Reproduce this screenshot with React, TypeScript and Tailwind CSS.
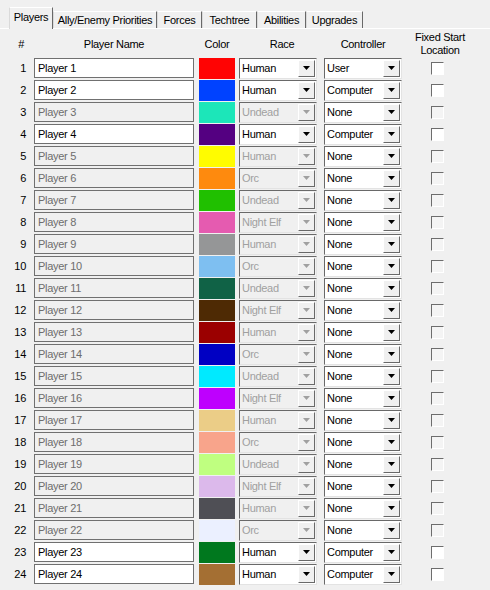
import React from "react";
import clsx from "clsx";

type Slot = {
  name: string;
  color: string;
  race: string;
  ctrl: string;
  on: boolean;
};

const COLORS = [
  "#ff0303",
  "#0042ff",
  "#1ce6b9",
  "#540081",
  "#fffc00",
  "#fe8a0e",
  "#20c000",
  "#e55bb0",
  "#959697",
  "#7ebff1",
  "#106246",
  "#4e2a04",
  "#9b0000",
  "#0000c3",
  "#00eaff",
  "#be00fe",
  "#ebcd87",
  "#f8a48b",
  "#bfff80",
  "#dcb9eb",
  "#4f4f55",
  "#ebf0ff",
  "#00781e",
  "#a46f33",
];

const RACES = ["Human", "Orc", "Undead", "Night Elf"];
const ACTIVE: Record<number, string> = { 1: "User", 2: "Computer", 4: "Computer", 23: "Computer", 24: "Computer" };

const SLOTS: Slot[] = COLORS.map((color, i) => {
  const n = i + 1;
  const on = n in ACTIVE;
  return {
    name: `Player ${n}`,
    color,
    race: on ? "Human" : RACES[i % 4],
    ctrl: ACTIVE[n] ?? "None",
    on,
  };
});

const TABS = [
  { label: "Players", w: "w-[44px]" },
  { label: "Ally/Enemy Priorities", w: "w-[104px]" },
  { label: "Forces", w: "w-[45px]" },
  { label: "Techtree", w: "w-[55px]" },
  { label: "Abilities", w: "w-[49px]" },
  { label: "Upgrades", w: "w-[57px]" },
];

const Arrow = ({ disabled }: { disabled?: boolean }) => (
  <svg width="7" height="4" viewBox="0 0 7 4">
    <path d="M0 0h7L3.5 4z" fill={disabled ? "#a0a0a0" : "#000"} />
  </svg>
);

const Combo = ({ value, disabled }: { value: string; disabled?: boolean }) => (
  <div
    className={clsx(
      "flex h-[21px] w-[78px] items-center border border-t-[#696969] border-l-[#696969] border-r-[#e3e3e3] border-b-[#e3e3e3]",
      disabled ? "bg-[#f0f0f0] text-[#a0a0a0]" : "bg-white text-black"
    )}
  >
    <span className="flex-1 truncate pl-[2px]">{value}</span>
    <div className="mr-[1px] flex h-[17px] w-[17px] items-center justify-center border border-t-white border-l-white border-r-[#696969] border-b-[#696969] bg-[#f0f0f0]">
      <Arrow disabled={disabled} />
    </div>
  </div>
);

const PlayerRow = ({ slot, n }: { slot: Slot; n: number }) => (
  <div className="flex h-[22px] items-center">
    <div className="w-[28px] pr-[2px] text-right text-black">{n}</div>
    {/* name edit box */}
    <div
      className={clsx(
        "ml-[6px] flex h-[20px] w-[160px] items-center border border-[#707070] pl-[3px]",
        slot.on ? "bg-white text-black" : "bg-[#f0f0f0] text-[#6d6d6d]"
      )}
    >
      {slot.name}
    </div>
    <div className="ml-[5px] h-[21px] w-[36px]" style={{ backgroundColor: slot.color }} />
    <div className="ml-[4px]">
      <Combo value={slot.race} disabled={!slot.on} />
    </div>
    <div className="ml-[7px]">
      <Combo value={slot.ctrl} />
    </div>
    <div
      className={clsx(
        "ml-[29px] h-[13px] w-[13px] border border-t-[#6d6d6d] border-l-[#6d6d6d] border-r-white border-b-white",
        slot.on ? "bg-white" : "bg-[#f4f4f4]"
      )}
    />
  </div>
);

export default function App() {
  return (
    <div className="h-[590px] w-[490px] overflow-hidden bg-[#f0f0f0] font-['Liberation_Sans',Arial,sans-serif] text-[11px] tracking-[-0.3px] text-black">
      {/* tab strip */}
      <div className="flex h-[28px] items-end pl-[9px]">
        {TABS.map((t, i) => (
          <div
            key={t.label}
            className={clsx(
              "flex items-center justify-center border-t border-l border-r border-t-white border-l-[#dadada] border-r-[#696969] bg-[#f0f0f0]",
              t.w,
              i === 0 ? "relative z-10 mb-[-1px] h-[22px] pb-[2px]" : "h-[17px] pt-[1px]"
            )}
          >
            {t.label}
          </div>
        ))}
      </div>

      {/* page */}
      <div className="h-[562px] border-t border-white">
        <div className="flex h-[28px] items-center pt-[2px]">
          <div className="w-[28px] pr-[4px] text-right">#</div>
          <div className="ml-[6px] w-[160px] text-center">Player Name</div>
          <div className="ml-[5px] w-[36px] text-center">Color</div>
          <div className="ml-[4px] w-[78px] pl-[8px] text-center">Race</div>
          <div className="ml-[7px] w-[78px] text-center">Controller</div>
          <div className="ml-[8px] w-[60px] text-center leading-[13px]">
            Fixed Start
            <br />
            Location
          </div>
        </div>
        {SLOTS.map((s, i) => (
          <PlayerRow key={s.name} slot={s} n={i + 1} />
        ))}
      </div>
    </div>
  );
}
